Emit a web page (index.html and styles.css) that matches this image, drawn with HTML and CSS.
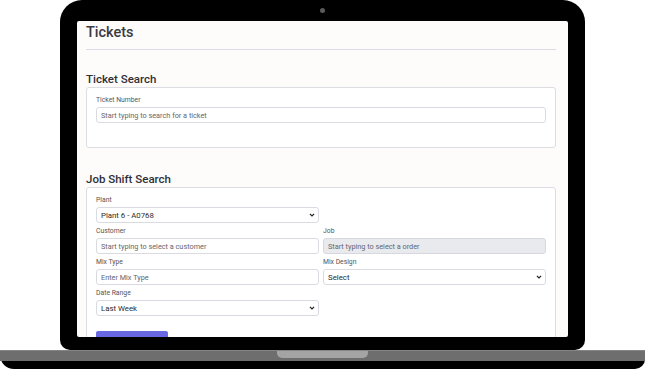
FILE: index.html
```html
<!DOCTYPE html>
<html lang="en">
<head>
  <meta charset="UTF-8" />
  <title>Tickets – Laptop Preview</title>
  <link rel="stylesheet" href="styles.css">
</head>
<body>

  <div class="laptop">
    <!-- BEZEL + SCREEN -->
    <div class="bezel">
      <div class="camera"></div>
      <div class="screen">
        <h1 class="page-title">Tickets</h1>
        <hr class="divider">

        <!-- TICKET SEARCH -->
        <h2 class="section-title">Ticket Search</h2>
        <div class="card card-short">
          <div class="field">
            <label>Ticket Number</label>
            <input type="text" placeholder="Start typing to search for a ticket">
          </div>
        </div>

        <!-- JOB SHIFT SEARCH -->
        <h2 class="section-title">Job Shift Search</h2>
        <div class="card">
          <div class="form-row">
            <div class="field">
              <label>Plant</label>
              <div class="select-wrap">
                <select><option>Plant 6 - A0768</option></select>
                <svg class="chevron" viewBox="0 0 10 6"><path d="M1.5 1.2 L5 4.6 L8.5 1.2" /></svg>
              </div>
            </div>
          </div>
          <div class="form-row">
            <div class="field">
              <label>Customer</label>
              <input type="text" placeholder="Start typing to select a customer">
            </div>
            <div class="field">
              <label>Job</label>
              <input type="text" placeholder="Start typing to select a order" disabled>
            </div>
          </div>
          <div class="form-row">
            <div class="field">
              <label>Mix Type</label>
              <input type="text" placeholder="Enter Mix Type">
            </div>
            <div class="field">
              <label>Mix Design</label>
              <div class="select-wrap">
                <select><option>Select</option></select>
                <svg class="chevron" viewBox="0 0 10 6"><path d="M1.5 1.2 L5 4.6 L8.5 1.2" /></svg>
              </div>
            </div>
          </div>
          <div class="form-row">
            <div class="field">
              <label>Date Range</label>
              <div class="select-wrap">
                <select><option>Last Week</option></select>
                <svg class="chevron" viewBox="0 0 10 6"><path d="M1.5 1.2 L5 4.6 L8.5 1.2" /></svg>
              </div>
            </div>
          </div>
          <button class="btn-search">Search</button>
        </div>
      </div>
    </div>

    <!-- BASE -->
    <div class="base">
      <div class="base-top">
        <div class="trackpad"></div>
      </div>
    </div>
  </div>

</body>
</html>
```

FILE: styles.css
```css
/* BASIC RESET & BODY */
* {
  margin: 0;
  padding: 0;
  box-sizing: border-box;
}
body {
  font-family: Roboto, "Liberation Sans", sans-serif;
  background-color: #fff;
  color: #333;
  width: 645px;
  height: 370px;
  overflow: hidden;
}

/* LAPTOP FRAME */
.laptop {
  width: 645px;
  display: flex;
  flex-direction: column;
}
.bezel {
  margin: 0 60px;
  height: 350px;
  background: #000;
  border-radius: 22px 22px 10px 10px;
  padding: 8px 17px 13px;
  display: flex;
  flex-direction: column;
}
.camera {
  width: 5px;
  height: 5px;
  border-radius: 50%;
  background: #5a5a5a;
  margin: 0 auto 8px;
}
.screen {
  flex: 1;
  background: #fdfcfa;
  border-radius: 2px;
  overflow: hidden;
  padding: 3px 12px 0 9px;
}
.base {
  height: 19px;
  background: #000;
  border-radius: 0 0 10px 14px;
}
.base-top {
  height: 11px;
  background: #6e6e6e;
  border-top: 1px solid #858585;
}
.trackpad {
  width: 91px;
  height: 7px;
  margin: 0 auto;
  background: #a4a4a4;
  border-radius: 0 0 5px 5px;
}

/* PAGE CONTENT */
.page-title {
  font-size: 14.5px;
  line-height: 17px;
  font-weight: 500;
  color: #3a3a44;
}
.divider {
  border: none;
  border-top: 1px solid #dcdce8;
  margin-top: 8px;
}
.section-title {
  font-size: 11.5px;
  line-height: 14px;
  font-weight: 500;
  color: #2f2f38;
  margin-top: 22px;
  margin-bottom: 1px;
}
.card + .section-title {
  margin-top: 24px;
}
.card {
  background: #fff;
  border: 1px solid #dcdde2;
  border-radius: 3px;
  padding: 8px 9px 14px;
}
.card-short {
  padding-bottom: 20px;
}

/* FORM */
.form-row {
  display: grid;
  grid-template-columns: 1fr 1fr;
  gap: 4px;
}
.field {
  margin-bottom: 4px;
}
.field label {
  display: block;
  font-size: 6.8px;
  line-height: 9px;
  color: #555;
  margin-bottom: 2px;
}
.field input,
.field select {
  display: block;
  width: 100%;
  height: 16px;
  border: 1px solid #d9dbe0;
  border-radius: 3px;
  background: #fff;
  padding: 0 4px;
  font-family: Roboto, "Liberation Sans", sans-serif;
  font-size: 7.3px;
  color: #333;
  outline: none;
}
.field input::placeholder {
  color: #66666c;
}
.field input:disabled {
  background: #e9eaee;
  border-color: #d6d8dd;
}
.select-wrap {
  position: relative;
}
.field select {
  appearance: none;
  -webkit-appearance: none;
  padding-left: 4px;
  font-size: 7.8px;
  color: #2a2a2a;
}
.chevron {
  position: absolute;
  right: 4px;
  top: 6px;
  width: 6px;
  height: 4px;
  fill: none;
  stroke: #222;
  stroke-width: 2;
}
.btn-search {
  display: block;
  margin-top: 11px;
  width: 72px;
  height: 20px;
  border: none;
  border-radius: 2px;
  background: #6a67e3;
  color: #fff;
  font-family: Roboto, "Liberation Sans", sans-serif;
  font-size: 7.5px;
}
```
